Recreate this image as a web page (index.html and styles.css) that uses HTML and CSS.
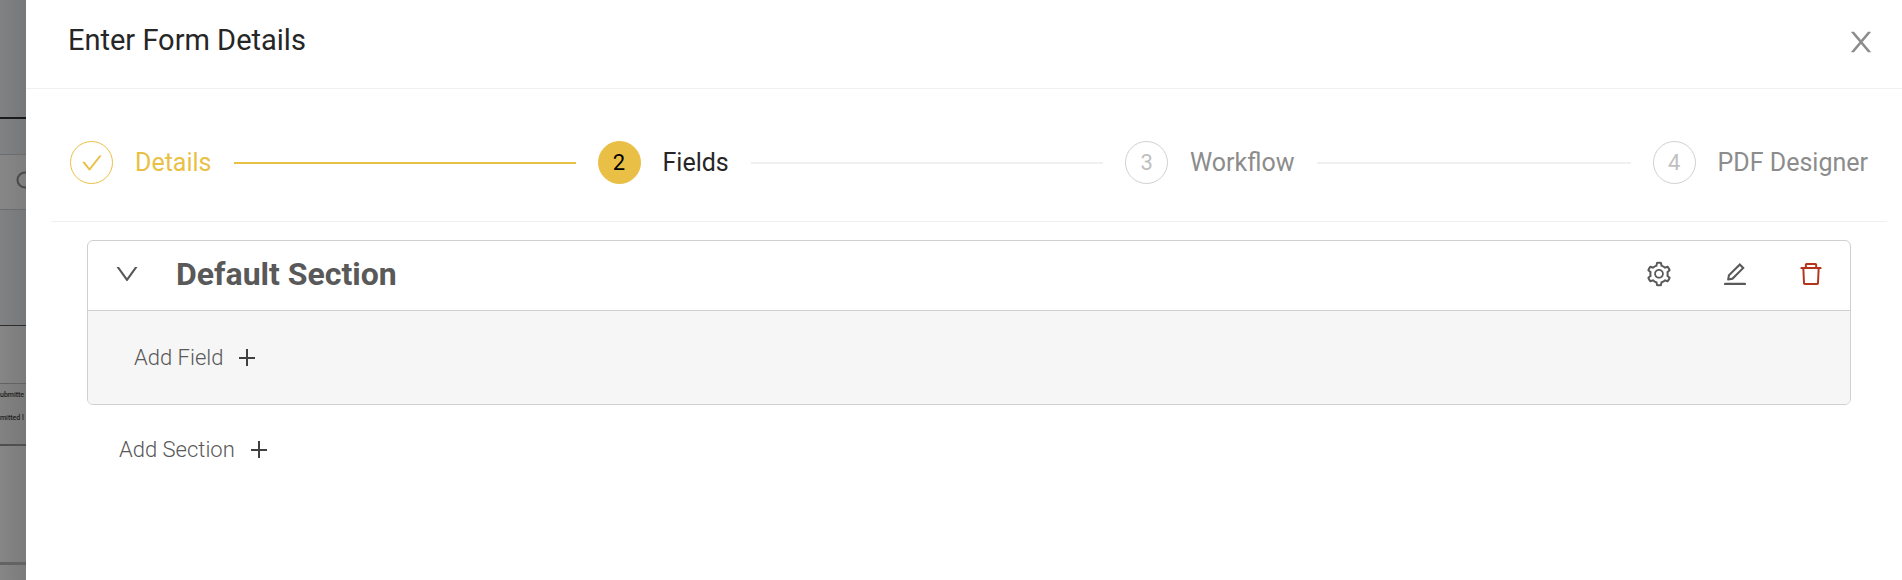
FILE: index.html
```html
<!DOCTYPE html>
<html lang="en">
<head>
    <meta charset="UTF-8">
    <meta name="viewport" content="width=device-width, initial-scale=1.0">
    <title>Enter Form Details</title>
    <link rel="stylesheet" href="styles.css">
</head>
<body>

<!-- Page behind the drawer -->
<div class="backdrop" aria-hidden="true">
    <div class="page-top"></div>
    <div class="page-tabs"></div>
    <div class="page-search">
        <svg class="search-icon" viewBox="0 0 24 24"><circle cx="9" cy="9" r="7.5" fill="none" stroke="currentColor" stroke-width="2"/><path d="M14.5 14.5L22 22" stroke="currentColor" stroke-width="2"/></svg>
    </div>
    <div class="page-space"></div>
    <div class="page-toolbar"></div>
    <div class="page-head">
        <span>ubmitte</span>
        <span>mitted l</span>
    </div>
    <div class="page-rows"></div>
    <div class="page-foot"></div>
</div>

<div class="drawer" role="dialog" aria-labelledby="drawer-title">
    <div class="drawer-header">
        <h1 id="drawer-title">Enter Form Details</h1>
        <button class="icon-button close" aria-label="Close">
            <svg viewBox="0 0 1024 1024"><path d="M563.8 512l262.5-312.9c4.4-5.2.7-13.1-6.1-13.1h-79.8c-4.7 0-9.2 2.1-12.3 5.7L511.6 449.8 295.1 191.7c-3-3.6-7.5-5.7-12.3-5.7H203c-6.8 0-10.5 7.9-6.1 13.1L459.4 512 196.9 824.9A7.95 7.95 0 00203 838h79.8c4.7 0 9.2-2.1 12.3-5.7l216.5-258.1 216.5 258.1c3 3.6 7.5 5.7 12.3 5.7h79.8c6.8 0 10.5-7.9 6.1-13.1L563.8 512z"/></svg>
        </button>
    </div>

    <div class="drawer-body">
        <ol class="steps">
            <li class="step done">
                <span class="step-icon">
                    <svg viewBox="0 0 1024 1024"><path d="M912 190h-69.9c-9.8 0-19.1 4.5-25.1 12.2L404.7 724.5 207 474a32 32 0 00-25.1-12.2H112c-6.7 0-10.4 7.7-6.3 12.9l273.9 347c12.8 16.2 37.4 16.2 50.3 0l488.4-618.9c4.1-5.1.4-12.8-6.3-12.8z"/></svg>
                </span>
                <span class="step-title">Details</span>
            </li>
            <li class="step active" aria-current="step">
                <span class="step-icon">2</span>
                <span class="step-title">Fields</span>
            </li>
            <li class="step">
                <span class="step-icon">3</span>
                <span class="step-title">Workflow</span>
            </li>
            <li class="step">
                <span class="step-icon">4</span>
                <span class="step-title">PDF Designer</span>
            </li>
        </ol>

        <div class="sections">
            <section class="section">
                <div class="section-header">
                    <button class="icon-button" aria-label="Collapse section">
                        <svg viewBox="0 0 1024 1024"><path d="M884 256h-75c-5.1 0-9.9 2.5-12.9 6.6L512 654.2 227.9 262.6c-3-4.1-7.8-6.6-12.9-6.6h-75c-6.5 0-10.3 7.4-6.5 12.7l352.6 486.1c12.8 17.6 39 17.6 51.7 0l352.6-486.1c3.9-5.3.1-12.7-6.4-12.7z"/></svg>
                    </button>
                    <h2>Default Section</h2>
                    <div class="section-actions">
                        <button class="icon-button" aria-label="Settings">
                            <svg viewBox="0 0 1024 1024"><path d="M924.8 625.7l-65.5-56c3.1-19 4.7-38.4 4.7-57.8s-1.6-38.8-4.7-57.8l65.5-56a32.03 32.03 0 009.3-35.2l-.9-2.6a443.74 443.74 0 00-79.7-137.9l-1.8-2.1a32.12 32.12 0 00-35.1-9.5l-81.3 28.9c-30-24.6-63.5-44-99.7-57.6l-15.7-85a32.05 32.05 0 00-25.8-25.7l-2.7-.5c-52.1-9.4-106.9-9.4-159 0l-2.7.5a32.05 32.05 0 00-25.8 25.7l-15.8 85.4a351.86 351.86 0 00-99 57.4l-81.9-29.1a32 32 0 00-35.1 9.5l-1.8 2.1a446.02 446.02 0 00-79.7 137.9l-.9 2.6c-4.5 12.5-.8 26.5 9.3 35.2l66.3 56.6c-3.1 18.8-4.6 38-4.6 57.1 0 19.2 1.5 38.4 4.6 57.1L99 625.5a32.03 32.03 0 00-9.3 35.2l.9 2.6c18.1 50.4 44.9 96.9 79.7 137.9l1.8 2.1a32.12 32.12 0 0035.1 9.5l81.9-29.1c29.8 24.5 63.1 43.9 99 57.4l15.8 85.4a32.05 32.05 0 0025.8 25.7l2.7.5a449.4 449.4 0 00159 0l2.7-.5a32.05 32.05 0 0025.8-25.7l15.7-85a350 350 0 0099.7-57.6l81.3 28.9a32 32 0 0035.1-9.5l1.8-2.1c34.8-41.1 61.6-87.5 79.7-137.9l.9-2.6c4.5-12.3.8-26.3-9.3-35zM788.3 465.9c2.5 15.1 3.8 30.6 3.8 46.1s-1.3 31-3.8 46.1l-6.6 40.1 74.7 63.9a370.03 370.03 0 01-42.6 73.6L721 702.8l-31.4 25.8c-23.9 19.6-50.5 35-79.3 45.8l-38.1 14.3-17.9 97a377.5 377.5 0 01-85 0l-17.9-97.2-37.8-14.5c-28.5-10.8-55-26.2-78.7-45.7l-31.4-25.9-93.4 33.2c-17-22.9-31.2-47.6-42.6-73.6l75.5-64.5-6.5-40c-2.4-14.9-3.7-30.3-3.7-45.5 0-15.3 1.2-30.6 3.7-45.5l6.5-40-75.5-64.5c11.3-26.1 25.6-50.7 42.6-73.6l93.4 33.2 31.4-25.9c23.7-19.5 50.2-34.9 78.7-45.7l37.9-14.3 17.9-97.2c28.1-3.2 56.8-3.2 85 0l17.9 97 38.1 14.3c28.7 10.8 55.4 26.2 79.3 45.8l31.4 25.8 92.8-32.9c17 22.9 31.2 47.6 42.6 73.6L781.8 426l6.5 39.9zM512 326c-97.2 0-176 78.8-176 176s78.8 176 176 176 176-78.8 176-176-78.8-176-176-176zm79.2 255.2A111.6 111.6 0 01512 614c-29.9 0-58-11.7-79.2-32.8A111.6 111.6 0 01400 502c0-29.9 11.7-58 32.8-79.2C454 401.6 482.1 390 512 390c29.9 0 58 11.6 79.2 32.8A111.6 111.6 0 01624 502c0 29.9-11.7 58-32.8 79.2z"/></svg>
                        </button>
                        <button class="icon-button" aria-label="Edit">
                            <svg viewBox="0 0 1024 1024"><path d="M257.7 752c2 0 4-.2 6-.5L431.9 722c2-.4 3.9-1.3 5.3-2.8l423.9-423.9a9.96 9.96 0 000-14.1L694.9 114.9c-1.9-1.9-4.4-2.9-7.1-2.9s-5.2 1-7.1 2.9L256.8 538.8c-1.5 1.5-2.4 3.3-2.8 5.3l-29.5 168.2a33.5 33.5 0 009.4 29.8c6.6 6.4 14.9 9.9 23.8 9.9zm67.4-174.4L687.8 215l73.3 73.3-362.7 362.6-88.9 15.7 15.6-89zM880 836H144c-17.7 0-32 14.3-32 32v36c0 4.4 3.6 8 8 8h784c4.4 0 8-3.6 8-8v-36c0-17.7-14.3-32-32-32z"/></svg>
                        </button>
                        <button class="icon-button danger" aria-label="Delete">
                            <svg viewBox="0 0 1024 1024"><path d="M360 184h-8c4.4 0 8-3.6 8-8v8h304v-8c0 4.4 3.6 8 8 8h-8v72h72v-80c0-35.3-28.7-64-64-64H352c-35.3 0-64 28.7-64 64v80h72v-72zm504 72H160c-17.7 0-32 14.3-32 32v32c0 4.4 3.6 8 8 8h60.4l24.7 523c1.6 34.1 29.8 61 63.9 61h454c34.2 0 62.3-26.8 63.9-61l24.7-523H888c4.4 0 8-3.6 8-8v-32c0-17.7-14.3-32-32-32zM731.3 840H292.7l-24.2-512h487l-24.2 512z"/></svg>
                        </button>
                    </div>
                </div>
                <div class="section-body">
                    <button class="add-button">
                        Add Field
                        <svg viewBox="0 0 24 24"><path d="M11 3h2v17h-2zM4 11h16v2H4z"/></svg>
                    </button>
                </div>
            </section>
            <button class="add-button add-section">
                Add Section
                <svg viewBox="0 0 24 24"><path d="M11 3h2v17h-2zM4 11h16v2H4z"/></svg>
            </button>
        </div>
    </div>
</div>

</body>
</html>
```

FILE: styles.css
```css
* {
    box-sizing: border-box;
}
body {
    margin: 0;
    min-height: 100vh;
    display: flex;
    font-family: Roboto, "Liberation Sans", sans-serif;
    color: #595959;
    background: #fff;
}
h1, h2 {
    margin: 0;
}
button {
    font-family: inherit;
    color: inherit;
    background: none;
    border: 0;
    padding: 0;
    cursor: pointer;
}
svg {
    display: block;
    fill: currentColor;
}

/* Dimmed page on the left */
.backdrop {
    width: 26px;
    flex: none;
    overflow: hidden;
    display: flex;
    flex-direction: column;
    background: linear-gradient(to right, #808284, #757779);
}
.page-top {
    height: 119px;
    border-bottom: 2px solid #1a1a1a;
}
.page-tabs {
    height: 35px;
}
.page-search {
    height: 56px;
    padding: 16px;
    border-top: 1px solid #6b6c6d;
    border-bottom: 1px solid #6b6c6d;
    background: linear-gradient(to right, #878787, #7c7c7c);
}
.search-icon {
    width: 24px;
    height: 24px;
    color: #4a4a4a;
}
.page-space {
    height: 116px;
    border-bottom: 1px solid #2c2c2c;
}
.page-toolbar {
    height: 57px;
    background: linear-gradient(to right, #868686, #7b7b7b);
}
.page-head {
    height: 63px;
    border-top: 1px solid #636363;
    border-bottom: 2px solid #4f4f4f;
    background: linear-gradient(to right, #828282, #787878);
    font-size: 7px;
    font-weight: 500;
    line-height: 23px;
    color: #1c1c1c;
    white-space: nowrap;
}
.page-head span {
    display: block;
}
.page-rows {
    height: 119px;
    border-bottom: 3px solid #636363;
    background: linear-gradient(to right, #868686, #7b7b7b);
}
.page-foot {
    flex: 1;
    background: linear-gradient(to right, #868686, #7b7b7b);
}

/* Drawer */
.drawer {
    flex: 1;
    min-width: 0;
    background: #fff;
}
.drawer-header {
    display: flex;
    align-items: center;
    justify-content: space-between;
    padding: 20px 25px 28px 42px;
    border-bottom: 1px solid #f0f0f0;
}
.drawer-header h1 {
    font-size: 29px;
    font-weight: 400;
    line-height: 40px;
    color: #262626;
}
.icon-button svg {
    width: 28px;
    height: 28px;
}
.close {
    padding-top: 4px;
    color: #8c8c8c;
}
.close svg {
    width: 32px;
    height: 32px;
}
.drawer-body {
    padding: 0 15px 0 25px;
}

/* Steps */
.steps {
    display: flex;
    gap: 22px;
    list-style: none;
    margin: 0;
    padding: 52px 19px 37px;
    border-bottom: 1px solid #f0f0f0;
}
.step {
    flex: 1;
    display: flex;
    align-items: center;
    color: #8c8c8c;
    white-space: nowrap;
}
.step:last-child {
    flex: none;
}
.step:not(:last-child)::after {
    content: "";
    flex: 1;
    height: 2px;
    margin-left: 22px;
    background: #f0f0f0;
}
.step-icon {
    width: 43px;
    height: 43px;
    margin-right: 22px;
    border: 1px solid #d0d0d0;
    border-radius: 50%;
    display: flex;
    align-items: center;
    justify-content: center;
    font-size: 22px;
    color: #bfbfbf;
}
.step-icon svg {
    width: 24px;
    height: 24px;
}
.step-title {
    font-size: 25px;
}
.done,
.done .step-icon {
    color: #eabf46;
    border-color: #eabf46;
}
.step.done::after {
    background: #eabf46;
}
.active {
    color: #262626;
}
.active .step-icon {
    color: #000;
    background: #eabf46;
    border-color: #eabf46;
}
.step.done:not(:last-child)::after {
    background: #eabf46;
}

/* Form sections */
.sections {
    padding: 18px 36px;
}
.section {
    border: 1px solid #d0d0d0;
    border-radius: 6px;
    overflow: hidden;
}
.section-header {
    display: flex;
    align-items: center;
    height: 70px;
    padding: 0 25px 4px;
    border-bottom: 1px solid #d0d0d0;
}
.section-header h2 {
    margin-left: 35px;
    font-size: 32px;
    font-weight: 700;
}
.section-actions {
    margin-left: auto;
    display: flex;
    gap: 48px;
}
.danger {
    color: #b5351c;
}
.section-body {
    padding: 32px 46px;
    background: #f6f6f6;
}
.add-button {
    display: flex;
    align-items: center;
    gap: 12px;
    font-size: 22px;
    font-weight: 300;
    line-height: 29px;
}
.add-button svg {
    width: 24px;
    height: 24px;
    color: #404040;
}
.add-section {
    margin: 30px 0 0 32px;
}
```
